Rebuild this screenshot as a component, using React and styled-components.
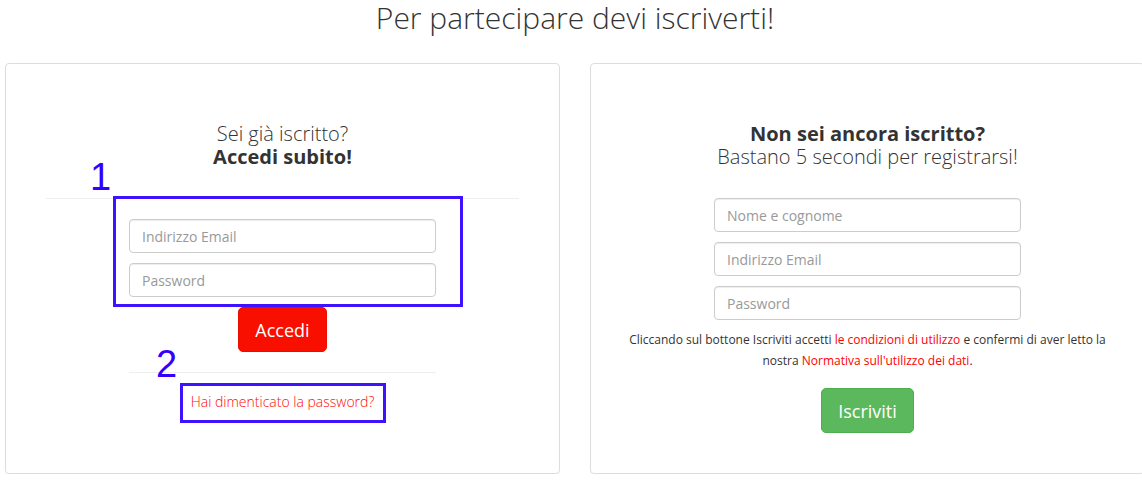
import React from "react";
import styled, { createGlobalStyle } from "styled-components";

const Global = createGlobalStyle`
  html, body { margin: 0; padding: 0; background: #fff; overflow: hidden; }
  body { font-family: "Open Sans", "Liberation Sans", sans-serif; color: #333; }
  * { box-sizing: border-box; }
`;

const Page = styled.div`
  width: 1142px;
`;

const Title = styled.h1`
  margin: 0;
  padding-left: 8px;
  height: 63px;
  text-align: center;
  font-weight: 300;
  font-size: 30px;
  line-height: 36px;
  color: #333;
`;

const Row = styled.div`
  display: flex;
  gap: 30px;
  padding-left: 5px;
`;

const Card = styled.div`
  position: relative;
  flex: 0 0 555px;
  height: 411px;
  border: 1px solid #ddd;
  border-radius: 4px;
  box-shadow: 0 1px 1px rgba(0, 0, 0, 0.05);
  display: flex;
  flex-direction: column;
  align-items: center;
  padding-top: 58px;
`;

const Heading = styled.div`
  text-align: center;
  font-size: 20px;
  line-height: 23px;
  color: #333;
`;

const Light = styled.div`
  font-weight: 300;
`;

const Bold = styled.div`
  font-weight: 700;
`;

const Divider = styled.hr`
  border: 0;
  border-top: 1px solid #eee;
  margin: ${(p) => p.$margin || "0"};
  width: ${(p) => p.$width};
`;

const Form = styled.div`
  width: 307px;
  margin-top: ${(p) => p.$top || "0"};
  display: flex;
  flex-direction: column;
  align-items: center;
  gap: 10px;
`;

const Input = styled.input`
  width: 100%;
  height: 34px;
  border: 1px solid #ccc;
  border-radius: 4px;
  padding: 6px 12px;
  font-family: "Open Sans", "Liberation Sans", sans-serif;
  font-size: 14px;
  color: #555;
  box-shadow: inset 0 1px 1px rgba(0, 0, 0, 0.075);
  &::placeholder { color: #999; }
`;

const Button = styled.button`
  height: 45px;
  margin-top: ${(p) => p.$top || "0"};
  padding: 0 16px;
  border: 1px solid ${(p) => p.$border};
  border-radius: 5px;
  background: ${(p) => p.$bg};
  color: #fff;
  font-family: "Open Sans", "Liberation Sans", sans-serif;
  font-size: 18px;
  line-height: 1;
`;

const Link = styled.a`
  color: #ff0a0a;
  font-weight: 300;
  font-size: 14px;
  text-decoration: none;
`;

const Notice = styled.p`
  margin: 9px 0 0;
  padding: 0 30px;
  text-align: center;
  font-size: 12px;
  line-height: 21px;
  color: #333;
`;

const Red = styled.a`
  color: #f00;
  text-decoration: none;
`;

const Mark = styled.div`
  position: absolute;
  left: ${(p) => p.$x}px;
  top: ${(p) => p.$y}px;
  width: ${(p) => p.$w}px;
  height: ${(p) => p.$h}px;
  border: 3px solid #3f12ff;
  pointer-events: none;
`;

const Num = styled.div`
  position: absolute;
  left: ${(p) => p.$x}px;
  top: ${(p) => p.$y}px;
  font-family: "Liberation Sans", Arial, sans-serif;
  font-size: 38px;
  line-height: 1;
  color: #3300ff;
`;

export default function App() {
  return (
    <Page>
      <Global />
      <Title>Per partecipare devi iscriverti!</Title>
      <Row>
        <Card>
          <Heading>
            <Light>Sei già iscritto?</Light>
            <Bold>Accedi subito!</Bold>
          </Heading>
          <Divider $width="473px" $margin="30px 0 20px" />
          <Form>
            <Input placeholder="Indirizzo Email" />
            <Input placeholder="Password" type="password" />
            <Button $bg="#f90f00" $border="#e60e00">Accedi</Button>
          </Form>
          <Divider $width="307px" $margin="20px 0 19px" />
          <Link href="#">Hai dimenticato la password?</Link>
          <Mark $x={107} $y={132} $w={350} $h={111} />
          <Num $x={84} $y={94}>1</Num>
          <Num $x={150} $y={281}>2</Num>
          <Mark $x={174} $y={319} $w={206} $h={40} />
        </Card>
        <Card>
          <Heading>
            <Bold>Non sei ancora iscritto?</Bold>
            <Light>Bastano 5 secondi per registrarsi!</Light>
          </Heading>
          <Form $top="30px">
            <Input placeholder="Nome e cognome" />
            <Input placeholder="Indirizzo Email" />
            <Input placeholder="Password" type="password" />
          </Form>
          <Notice>
            Cliccando sul bottone Iscriviti accetti <Red href="#">le condizioni di utilizzo</Red> e confermi di aver letto la nostra <Red href="#">Normativa sull'utilizzo dei dati</Red>.
          </Notice>
          <Button $bg="#5cb85c" $border="#4cae4c" $top="17px">Iscriviti</Button>
        </Card>
      </Row>
    </Page>
  );
}
